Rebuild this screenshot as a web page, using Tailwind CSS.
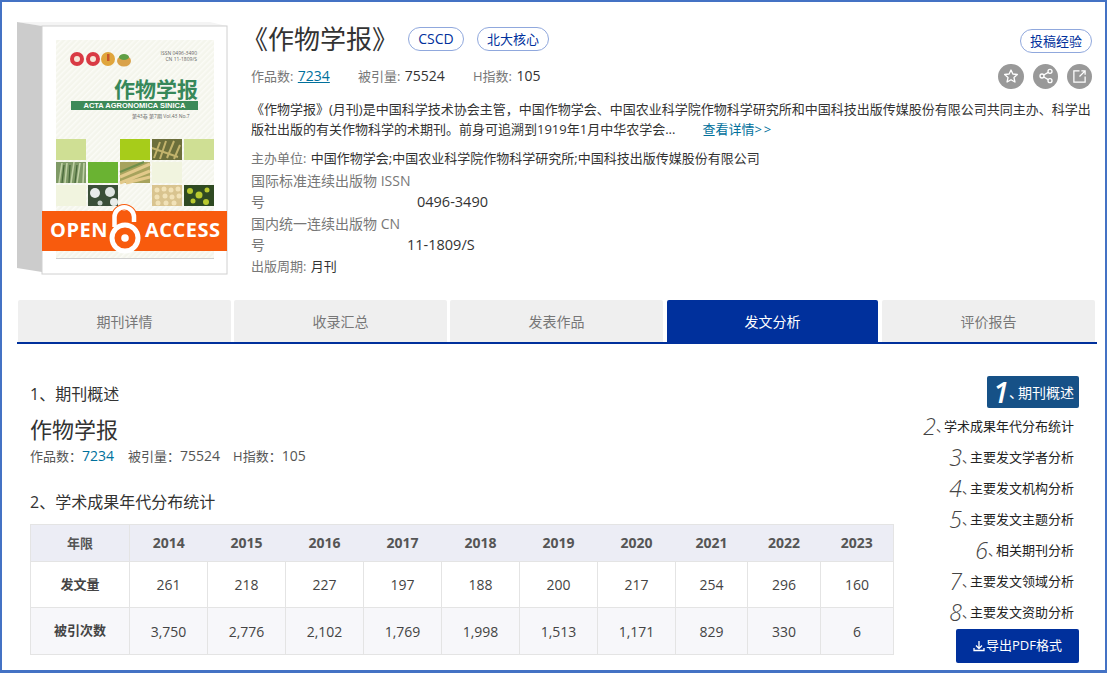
<!DOCTYPE html>
<html lang="zh">
<head>
<meta charset="utf-8">
<script src="https://cdn.jsdelivr.net/npm/@tailwindcss/browser@4"></script>
<title>作物学报</title>
</head>
<body class="m-0 bg-white">
<div class="w-[1107px] h-[673px] overflow-hidden border-t-2 border-l-2 border-r-2 border-b-[3px] border-[#4472c4] bg-white text-[#333] font-['Open_Sans','Noto_Sans_CJK_SC',sans-serif] flex flex-col">

  <!-- header -->
  <div class="flex h-[286px] shrink-0">
    <!-- cover -->
    <div class="relative w-[228px] h-[286px] shrink-0">
      <svg class="absolute left-0 top-0" width="228" height="276" viewBox="0 0 228 276">
        <defs>
          <pattern id="st" width="4" height="4" patternUnits="userSpaceOnUse" patternTransform="rotate(45)"><rect width="4" height="4" fill="#f4f5ec"/><rect width="1.500" height="4" fill="#fbfbf6"/></pattern>
        </defs>
        <polygon points="15,20 208,20 225,24 40,24" fill="#f4f4f4"/>
        <polygon points="15,20 40,24 40,270 15,266" fill="#cccccc"/>
        <rect x="40" y="24" width="185" height="248" fill="#fff" stroke="#d0d0d0" stroke-width="1"/>
        <rect x="54" y="38" width="158" height="218" fill="url(#st)"/>
        <line x1="54" y1="256.500" x2="212" y2="256.500" stroke="#cfcfcf"/>
        <!-- logos -->
        <circle cx="75" cy="57" r="7" fill="#d93a44"/><circle cx="75" cy="57" r="3" fill="#f6e6d8"/>
        <circle cx="91" cy="57" r="7" fill="#d93a44"/><circle cx="91" cy="57" r="3" fill="#f6e6d8"/>
        <circle cx="106" cy="57" r="7" fill="#e0a53c"/><rect x="105" y="52" width="2.500" height="7" fill="#c8552a"/>
        <ellipse cx="122" cy="59" rx="7" ry="5.500" fill="#d9a24a"/><ellipse cx="122" cy="55" rx="5" ry="3" fill="#5f9f45"/>
        <!-- tiles -->
        <rect x="54" y="137" width="30" height="21" fill="#cfdf94"/>
        <rect x="118" y="137" width="30" height="21" fill="#a7cc1a"/>
        <rect x="150" y="137" width="30" height="21" fill="#6c6f3b"/>
        <path d="M152 156l6-16M158 157l6-18M165 156l7-17M172 157l6-14M150 146l26 9" stroke="#c2b36c" stroke-width="2" fill="none"/>
        <rect x="182" y="137" width="30" height="21" fill="#cfdf94"/>
        <rect x="54" y="160" width="30" height="21" fill="#7f9a66"/>
        <path d="M57 181l3-20M63 181l2-20M69 181l3-21M75 181l3-20M81 181l1-20" stroke="#bfd0a5" stroke-width="1.600" fill="none"/>
        <path d="M60 181l2-18M67 181l1-18M73 181l2-18" stroke="#47663b" stroke-width="1.200" fill="none"/>
        <rect x="86" y="160" width="30" height="21" fill="#6ab332"/>
        <rect x="118" y="160" width="30" height="21" fill="#a7a35d"/>
        <path d="M118 175l30-13M118 181l30-12M124 181l24-6" stroke="#e2c98a" stroke-width="3" fill="none"/>
        <path d="M118 170l24-10" stroke="#6f8f4b" stroke-width="2" fill="none"/>
        <rect x="150" y="160" width="30" height="21" fill="#f1f4df"/>
        <rect x="54" y="183" width="30" height="21" fill="#f1f4df"/>
        <rect x="86" y="183" width="30" height="21" fill="#3a4f38"/>
        <circle cx="93" cy="191" r="5" fill="#e8ecea"/><circle cx="108" cy="190" r="5" fill="#dfe5e2"/><circle cx="112" cy="200" r="4" fill="#e8ecea"/><circle cx="98" cy="201" r="2.500" fill="#c9d2cc"/>
        <rect x="150" y="183" width="30" height="21" fill="#d9c48f"/>
        <g fill="#f1e2b8"><circle cx="155" cy="188" r="2.500"/><circle cx="162" cy="187" r="2.500"/><circle cx="169" cy="188" r="2.500"/><circle cx="176" cy="187" r="2.500"/><circle cx="155" cy="195" r="2.500"/><circle cx="163" cy="194" r="2.500"/><circle cx="170" cy="195" r="2.500"/><circle cx="177" cy="194" r="2.500"/><circle cx="156" cy="201" r="2.500"/><circle cx="164" cy="201" r="2.500"/><circle cx="172" cy="201" r="2.500"/></g>
        <rect x="182" y="183" width="30" height="21" fill="#2f4a22"/>
        <g fill="#b9c92e"><circle cx="188" cy="189" r="3"/><circle cx="197" cy="193" r="3.500"/><circle cx="205" cy="188" r="2.500"/><circle cx="191" cy="199" r="2.500"/><circle cx="204" cy="200" r="3"/></g>
        <!-- banner -->
        <rect x="40" y="209" width="185" height="40" fill="#f85b0d"/>
        <!-- open access lock -->
        <path d="M112.500 225v-10a9.750 9.750 0 0 1 19.500 0v5" fill="none" stroke="#f85b0d" stroke-width="6.500"/>
        <path d="M112.500 225v-10a9.750 9.750 0 0 1 19.500 0v5" fill="none" stroke="#fff" stroke-width="4.500"/>
        <circle cx="123" cy="236" r="13" fill="#f85b0d" stroke="#fff" stroke-width="5"/>
        <circle cx="123" cy="236" r="3.800" fill="#fff"/>
      </svg>
      <div class="absolute left-[53px] top-[48px] w-[142px] text-right text-[5px] leading-[6px] text-[#666]">ISSN 0496-3490<br>CN 11-1809/S</div>
      <div class="absolute left-[112px] top-[75px] text-[21px] leading-[24px] font-bold text-[#37885a] tracking-[0px]">作物学报</div>
      <div class="absolute left-[69px] top-[99px] w-[127px] h-[9px] bg-[#3c8a58] text-white text-[7.500px] leading-[9px] font-bold text-center whitespace-nowrap font-['Liberation_Sans',sans-serif]">ACTA AGRONOMICA SINICA</div>
      <div class="absolute left-[130px] top-[111px] text-[5px] leading-[6px] text-[#666] whitespace-nowrap">第43卷 第7期 Vol.43 No.7</div>
      <div class="absolute left-[48px] top-[215px] text-[20px] leading-[26px] font-bold text-white tracking-[0.500px] whitespace-nowrap">OPEN</div>
      <div class="absolute left-[143px] top-[215px] text-[20px] leading-[26px] font-bold text-white tracking-[0.500px] whitespace-nowrap">ACCESS</div>
    </div>

    <!-- info -->
    <div class="flex-1 min-w-0 pl-[21px] pr-[13px] relative">
      <div class="flex items-center h-[30px] mt-[22px]">
        <h1 class="text-[26px] leading-[30px] font-normal ml-[-9px] text-[#333] whitespace-nowrap">《作物学报》</h1>
        <span class="ml-[10px] w-[56px] h-[24px] rounded-full border border-[#90a8dd] text-[#00309c] text-[14px] leading-[22px] text-center">CSCD</span>
        <span class="ml-[13px] w-[72px] h-[24px] rounded-full border border-[#90a8dd] text-[#00309c] text-[13px] leading-[22px] text-center">北大核心</span>
        <span class="ml-auto w-[72px] h-[24px] mt-[3px] rounded-full border border-[#90a8dd] text-[#00309c] text-[13px] leading-[22px] text-center">投稿经验</span>
      </div>
      <div class="flex items-center h-[26px] mt-[9px]">
        <div class="w-[107px] text-[13px] text-[#777] whitespace-nowrap">作品数: <a class="text-[14px] text-[#00709c] underline ml-[1px]">7234</a></div>
        <div class="w-[115px] text-[13px] text-[#777] whitespace-nowrap">被引量: <span class="text-[14px] text-[#333] ml-[1px]">75524</span></div>
        <div class="text-[13px] text-[#777] whitespace-nowrap">H指数: <span class="text-[14px] text-[#333] ml-[1px]">105</span></div>
        <div class="ml-auto flex gap-[9px]">
          <span class="w-[26px] h-[25px] rounded-full bg-[#999] flex items-center justify-center">
            <svg width="16" height="16" viewBox="0 0 24 24" fill="none" stroke="#fff" stroke-width="2" stroke-linejoin="round"><polygon points="12,3 14.800,9 21.500,9.800 16.500,14.300 17.900,21 12,17.600 6.100,21 7.500,14.300 2.500,9.800 9.200,9"/></svg>
          </span>
          <span class="w-[25px] h-[25px] rounded-full bg-[#999] flex items-center justify-center">
            <svg width="16" height="16" viewBox="0 0 24 24" fill="none" stroke="#fff" stroke-width="2"><circle cx="18" cy="5" r="3"/><circle cx="6" cy="12" r="3"/><circle cx="18" cy="19" r="3"/><path d="M8.600 10.500l6.800-4M8.600 13.500l6.800 4"/></svg>
          </span>
          <span class="w-[25px] h-[25px] rounded-full bg-[#999] flex items-center justify-center">
            <svg width="15" height="15" viewBox="0 0 24 24" fill="none" stroke="#fff" stroke-width="2"><path d="M12 3H3v18h18v-9"/><path d="M21 3l-9 9M15 3h6v6"/></svg>
          </span>
        </div>
      </div>
      <p class="mt-[10px] text-[13px] leading-[20px] text-[#333]">《作物学报》(月刊)是中国科学技术协会主管，中国作物学会、中国农业科学院作物科学研究所和中国科技出版传媒股份有限公司共同主办、科学出版社出版的有关作物科学的术期刊。前身可追溯到1919年1月中华农学会...<a class="ml-[27px] text-[#00709c]">查看详情<span class="tracking-[2px]">&gt;&gt;</span></a></p>
      <div class="mt-[9px] text-[13px] leading-[21.500px] text-[#777]">
        <div>主办单位: <span class="text-[#333] ml-[1px]">中国作物学会;中国农业科学院作物科学研究所;中国科技出版传媒股份有限公司</span></div>
        <div class="flex items-end text-[14px]"><span class="w-[166px] shrink-0">国际标准连续出版物 ISSN<br>号</span><span class="text-[#333] text-[14.500px]">0496-3490</span></div>
        <div class="flex items-end text-[14px]"><span class="w-[156px] shrink-0">国内统一连续出版物 CN<br>号</span><span class="text-[#333] text-[14.500px]">11-1809/S</span></div>
        <div>出版周期: <span class="text-[#333] ml-[1px]">月刊</span></div>
      </div>
    </div>
  </div>

  <!-- tabs -->
  <div class="mt-[12px] mx-[15px] w-[1080px] h-[44px] shrink-0 border-b-2 border-[#00309c] flex pl-[1px] text-[14px] leading-[43px] text-center text-[#777]">
    <div class="w-[213px] h-[42px] rounded-t-[2px] bg-[#efefef]">期刊详情</div>
    <div class="ml-[3px] w-[213px] h-[42px] rounded-t-[2px] bg-[#efefef]">收录汇总</div>
    <div class="ml-[3px] w-[213px] h-[42px] rounded-t-[2px] bg-[#efefef]">发表作品</div>
    <div class="ml-[4px] w-[211px] h-[42px] rounded-t-[2px] bg-[#00309c] text-white">发文分析</div>
    <div class="ml-[4px] w-[213px] h-[42px] rounded-t-[2px] bg-[#efefef]">评价报告</div>
  </div>

  <!-- body -->
  <div class="flex flex-1 min-h-0">
    <div class="ml-[28px] w-[864px] shrink-0">
      <h2 class="mt-[39px] text-[16px] leading-[22px] font-normal">1、期刊概述</h2>
      <div class="mt-[10px] text-[22px] leading-[28px]">作物学报</div>
      <div class="mt-[3px] text-[13px] leading-[20px] text-[#555] whitespace-nowrap">作品数：<span class="text-[14px] text-[#00709c]">7234</span><span class="ml-[14px]">被引量：<span class="text-[14px]">75524</span></span><span class="ml-[13px]">H指数：<span class="text-[14px]">105</span></span></div>
      <h2 class="mt-[25px] text-[16px] leading-[22px] font-normal">2、学术成果年代分布统计</h2>
      <table class="mt-[11px] w-[864px] table-fixed border-collapse text-[14px] text-center text-[#444]">
        <colgroup>
          <col class="w-[99px]"><col class="w-[78px]"><col class="w-[78px]"><col class="w-[78px]"><col class="w-[78px]"><col class="w-[78px]"><col class="w-[78px]"><col class="w-[78px]"><col class="w-[72px]"><col class="w-[73px]"><col class="w-[73px]">
        </colgroup>
        <tr class="h-[37px] bg-[#ecedf5] font-bold text-[#555]">
          <td class="border border-[#e4e4e4] text-[13px] pt-[1px]">年限</td><td class="border-y border-[#e4e4e4] pb-[2px]">2014</td><td class="border-y border-[#e4e4e4] pb-[2px]">2015</td><td class="border-y border-[#e4e4e4] pb-[2px]">2016</td><td class="border-y border-[#e4e4e4] pb-[2px]">2017</td><td class="border-y border-[#e4e4e4] pb-[2px]">2018</td><td class="border-y border-[#e4e4e4] pb-[2px]">2019</td><td class="border-y border-[#e4e4e4] pb-[2px]">2020</td><td class="border-y border-[#e4e4e4] pb-[2px]">2021</td><td class="border-y border-[#e4e4e4] pb-[2px]">2022</td><td class="border border-[#e4e4e4] border-l-0 pb-[2px]">2023</td>
        </tr>
        <tr class="h-[46px]">
          <td class="border border-[#e4e4e4] font-bold text-[13px]">发文量</td><td class="border border-[#e4e4e4]">261</td><td class="border border-[#e4e4e4]">218</td><td class="border border-[#e4e4e4]">227</td><td class="border border-[#e4e4e4]">197</td><td class="border border-[#e4e4e4]">188</td><td class="border border-[#e4e4e4]">200</td><td class="border border-[#e4e4e4]">217</td><td class="border border-[#e4e4e4]">254</td><td class="border border-[#e4e4e4]">296</td><td class="border border-[#e4e4e4]">160</td>
        </tr>
        <tr class="h-[47px] bg-[#f7f7fa]">
          <td class="border border-[#e4e4e4] font-bold text-[13px]">被引次数</td><td class="border border-[#e4e4e4]">3,750</td><td class="border border-[#e4e4e4]">2,776</td><td class="border border-[#e4e4e4]">2,102</td><td class="border border-[#e4e4e4]">1,769</td><td class="border border-[#e4e4e4]">1,998</td><td class="border border-[#e4e4e4]">1,513</td><td class="border border-[#e4e4e4]">1,171</td><td class="border border-[#e4e4e4]">829</td><td class="border border-[#e4e4e4]">330</td><td class="border border-[#e4e4e4]">6</td>
        </tr>
      </table>
    </div>

    <!-- side nav -->
    <div class="flex-1 pr-[26px] flex flex-col items-end pt-[32px] text-[13px] text-[#222]">
      <div class="w-[92px] h-[32px] rounded-[2px] bg-[#165187] text-white flex items-center justify-end pr-[5px] whitespace-nowrap"><span class="text-[29px] leading-[32px] italic font-semibold">1</span><span class="text-[14px] mr-[-5px]">、</span><span class="text-[14px]">期刊概述</span></div>
      <div class="h-[31px] mt-[3px] flex items-center pr-[5px] whitespace-nowrap"><span class="text-[23px] italic font-light text-[#444]">2</span><span class="mr-[-5px] text-[#444]">、</span>学术成果年代分布统计</div>
      <div class="h-[31px] flex items-center pr-[5px] whitespace-nowrap"><span class="text-[23px] italic font-light text-[#444]">3</span><span class="mr-[-5px] text-[#444]">、</span>主要发文学者分析</div>
      <div class="h-[31px] flex items-center pr-[5px] whitespace-nowrap"><span class="text-[23px] italic font-light text-[#444]">4</span><span class="mr-[-5px] text-[#444]">、</span>主要发文机构分析</div>
      <div class="h-[31px] flex items-center pr-[5px] whitespace-nowrap"><span class="text-[23px] italic font-light text-[#444]">5</span><span class="mr-[-5px] text-[#444]">、</span>主要发文主题分析</div>
      <div class="h-[31px] flex items-center pr-[5px] whitespace-nowrap"><span class="text-[23px] italic font-light text-[#444]">6</span><span class="mr-[-5px] text-[#444]">、</span>相关期刊分析</div>
      <div class="h-[31px] flex items-center pr-[5px] whitespace-nowrap"><span class="text-[23px] italic font-light text-[#444]">7</span><span class="mr-[-5px] text-[#444]">、</span>主要发文领域分析</div>
      <div class="h-[31px] flex items-center pr-[5px] whitespace-nowrap"><span class="text-[23px] italic font-light text-[#444]">8</span><span class="mr-[-5px] text-[#444]">、</span>主要发文资助分析</div>
      <div class="w-[123px] h-[34px] mt-[1px] rounded-[2px] bg-[#00309c] text-white text-[13px] flex items-center justify-center whitespace-nowrap">
        <svg class="mr-[1px]" width="12" height="12" viewBox="0 0 12 12" fill="none" stroke="#fff" stroke-width="1.300"><path d="M6 1v7M3 5.500l3 3 3-3M1 8v2.500h10V8"/></svg>导出PDF格式
      </div>
    </div>
  </div>
</div>
</body>
</html>
